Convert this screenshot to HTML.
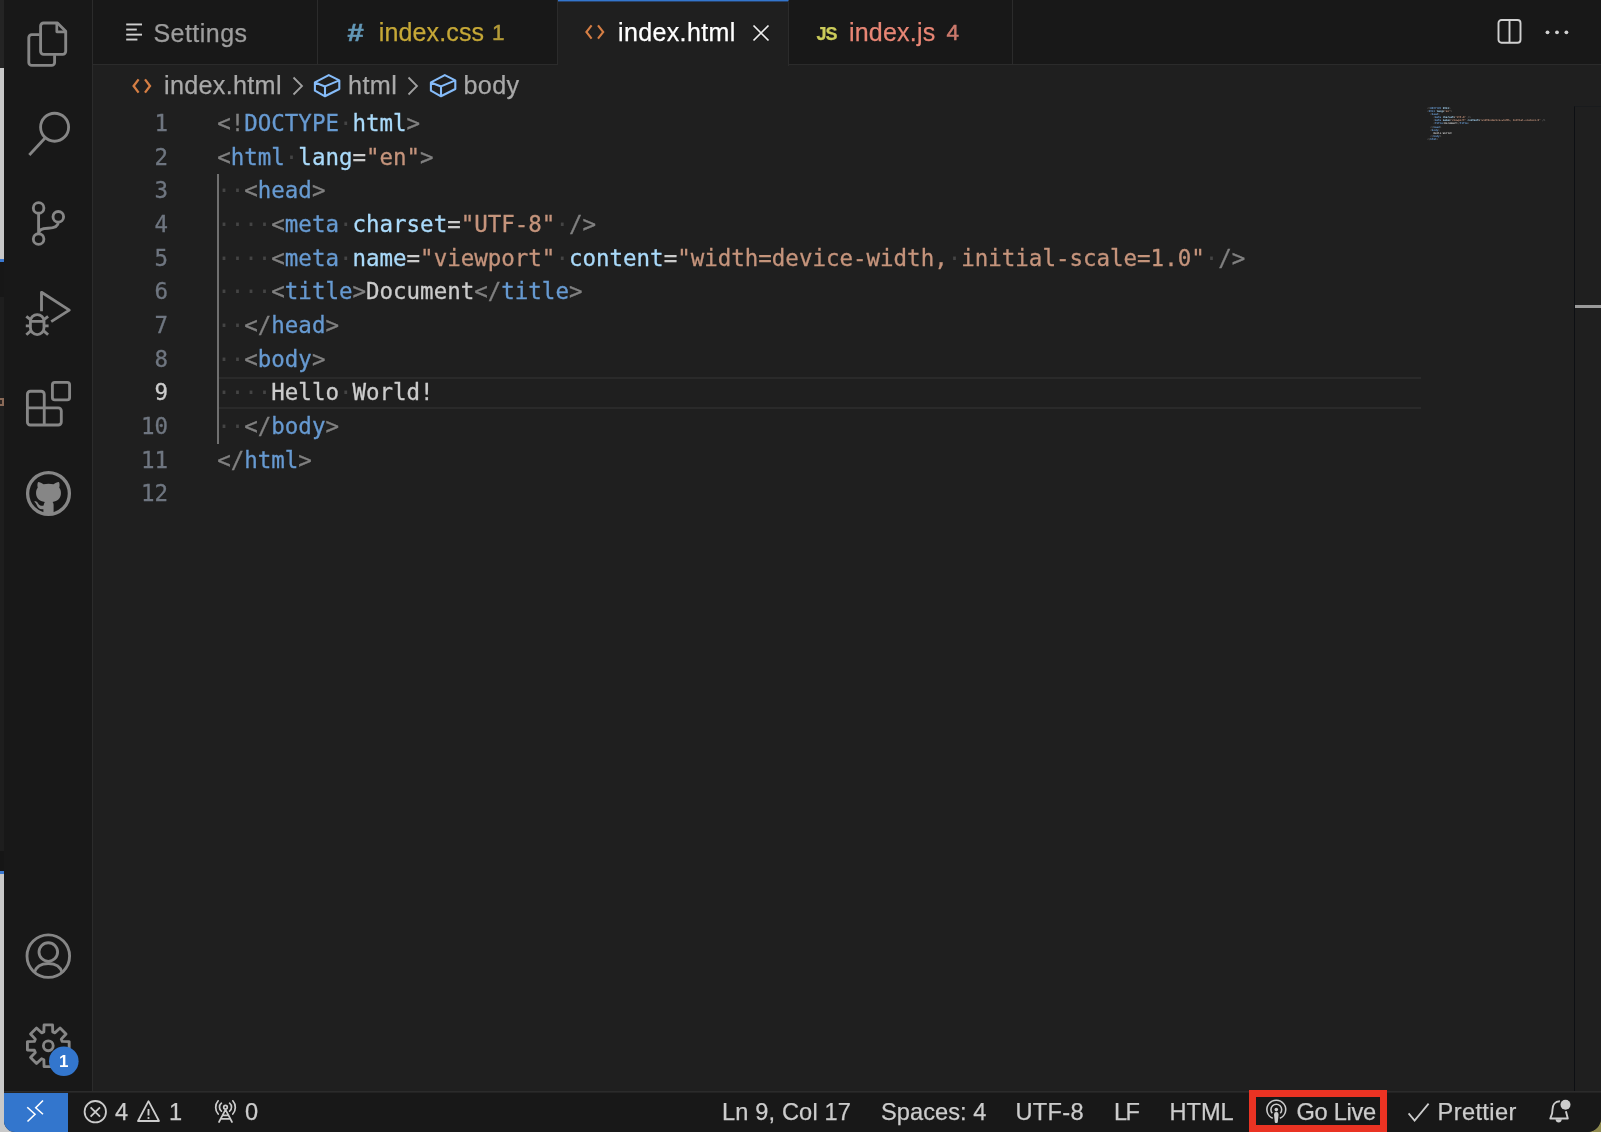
<!DOCTYPE html>
<html lang="en">
<head>
<meta charset="UTF-8">
<title>index.html</title>
<style>
*{box-sizing:border-box;margin:0;padding:0}
html,body{width:1602px;height:1134px;overflow:hidden;background:#fff}
body{position:relative;font-family:"Liberation Sans",sans-serif;color:#ccc}
.abs{position:absolute}
#backdrop{left:0;top:0;width:1602px;height:1134px;background:#fff}
#window{left:4px;top:0;width:1597px;height:1132px;background:#1f1f1f;border-radius:0 0 14px 11px;overflow:hidden}
#activity{will-change:transform;left:0;top:0;width:89px;height:1092px;background:#181818;border-right:1px solid #2b2b2b}
#tabs{will-change:transform;left:89px;top:0;right:0;height:65px;background:#181818;border-bottom:1px solid #2b2b2b}
.tab{-webkit-text-stroke:0.25px;position:absolute;top:0;height:65px;border-right:1px solid #2b2b2b;font-size:25px;line-height:64px;white-space:nowrap}
.tab span{position:absolute;top:0}
#crumbs{-webkit-text-stroke:0.25px;will-change:transform;left:89px;top:65px;right:0;height:41px;font-size:25.2px;line-height:40px;color:#a9a9a9;white-space:nowrap}
#crumbs span{position:absolute;top:0}
#status{-webkit-text-stroke:0.25px;will-change:transform;left:0;top:1091px;width:1597px;height:41px;background:#181818;border-top:1px solid #2b2b2b;box-shadow:inset 0 1px 0 #232323;font-size:23.6px;line-height:40px;color:#ccc;white-space:nowrap}
#status span{position:absolute;top:0}
#code{left:0;top:107px;will-change:transform;-webkit-text-stroke:0.3px;font-family:"DejaVu Sans Mono","Liberation Mono",monospace;font-size:22.47px;line-height:33.64px;white-space:pre}
.ln{position:absolute;left:89px;width:75px;text-align:right;color:#6f7680;height:33.64px}
.cl{position:absolute;left:213.2px;height:33.64px;color:#ccc}
.g{color:#808080}.t{color:#679ad1}.a{color:#aadafa}.s{color:#c5947c}.w{color:#444;-webkit-text-stroke:0}
</style>
</head>
<body>
<div id="backdrop" class="abs">
  <div class="abs" style="left:0;top:0;width:6px;height:68px;background:#242424"></div>
  <div class="abs" style="left:0;top:68px;width:6px;height:191px;background:#c8c8c8"></div>
  <div class="abs" style="left:0;top:259px;width:6px;height:3px;background:#3a78d0"></div>
  <div class="abs" style="left:0;top:262px;width:6px;height:35px;background:#171717"></div>
  <div class="abs" style="left:0;top:297px;width:6px;height:554px;background:#1e1e1e"></div>
  <div class="abs" style="left:0;top:398px;width:4px;height:8px;background:#8a6a58"></div>
  <div class="abs" style="left:0;top:400px;width:2px;height:4px;background:#2a2422"></div>
  <div class="abs" style="left:0;top:851px;width:6px;height:20px;background:#161616"></div>
  <div class="abs" style="left:0;top:871px;width:6px;height:3px;background:#3a78d0"></div>
  <div class="abs" style="left:0;top:874px;width:20px;height:258px;background:#c9c9c9"></div>
  <div class="abs" style="left:1585px;top:1116px;width:16px;height:16px;background:#8f8a4f"></div>
</div>
<div id="window" class="abs">
  <div id="activity" class="abs">
  <svg class="abs" style="left:0;top:0" width="89" height="1092" viewBox="0 0 89 1092">
    <g fill="none" stroke="#868686" stroke-width="2.85" stroke-linejoin="round">
      <!-- files -->
      <path d="M39.6 23 H53.5 L61.7 31.2 V51.3 a3 3 0 0 1 -3 3 H39.6 a3 3 0 0 1 -3 -3 V26 a3 3 0 0 1 3 -3 Z"/>
      <path d="M52.8 23.5 V31.8 H61.5" stroke-width="2.7"/>
      <path d="M35.5 34.6 H27.8 a3 3 0 0 0 -3 3 V62.4 a3 3 0 0 0 3 3 H47.6 a3 3 0 0 0 3 -3 V55.3"/>
      <!-- search -->
      <circle cx="50.6" cy="127.2" r="14"/>
      <path d="M41.3 137.7 L25.3 155" stroke-linecap="butt"/>
      <!-- scm -->
      <circle cx="34.6" cy="207.9" r="5.3"/><circle cx="54.3" cy="216.8" r="5.3"/><circle cx="34.6" cy="239" r="5.3"/>
      <path d="M34.6 213.2 V233.7 M54.3 222.1 C54.3 227.5 49 228.2 44 228.2 C38.5 228.2 34.6 230 34.6 233.7"/>
      <!-- debug -->
      <path d="M37.5 311.3 V292.3 L65.3 310.1 L47.2 321.6" stroke-linecap="butt"/>
      <path d="M26.4 321.3 A6.8 6.75 0 0 1 40 321.3 H26.4 V327.7 A6.8 6.85 0 0 0 40 327.7 V321.3"/>
      <path d="M22.3 316.3 L26.5 319.7 M44.1 316.3 L39.9 319.7 M21.8 325.8 H25.6 M40.8 325.8 H44.6 M22.3 334.8 L27 330.6 M44.1 334.8 L39.4 330.6" stroke-linecap="butt"/>
      <!-- extensions -->
      <rect x="48.4" y="382.3" width="17.2" height="17.5" rx="2.4"/>
      <path d="M26.4 391.2 H37.25 a3 3 0 0 1 3 3 V407.9 H54.3 a3 3 0 0 1 3 3 V422 a3 3 0 0 1 -3 3 H26.4 a3 3 0 0 1 -3 -3 V394.2 a3 3 0 0 1 3 -3 Z M23.4 407.9 H40.25 V425"/>
      <!-- github -->
      <circle cx="44.5" cy="493.5" r="20.9" stroke-width="3.3"/>
      <!-- account -->
      <circle cx="44.3" cy="956.1" r="21.3"/>
      <circle cx="44.3" cy="952" r="9.3"/>
      <path d="M30.3 973 C32 966.5 37 963.5 44.3 963.5 C51.6 963.5 56.6 966.5 58.3 973"/>
      <!-- gear -->
      <path d="M39.85 1031.90 L40.07 1024.92 L48.53 1024.92 L48.75 1031.90 L50.98 1032.82 L56.07 1028.05 L62.05 1034.03 L57.28 1039.12 L58.20 1041.35 L65.18 1041.57 L65.18 1050.03 L58.20 1050.25 L57.28 1052.48 L62.05 1057.57 L56.07 1063.55 L50.98 1058.78 L48.75 1059.70 L48.53 1066.68 L40.07 1066.68 L39.85 1059.70 L37.62 1058.78 L32.53 1063.55 L26.55 1057.57 L31.32 1052.48 L30.40 1050.25 L23.42 1050.03 L23.42 1041.57 L30.40 1041.35 L31.32 1039.12 L26.55 1034.03 L32.53 1028.05 L37.62 1032.82 Z"/>
      <circle cx="44.3" cy="1045.8" r="4.9"/>
    </g>
    <!-- github cat -->
    <path fill="#868686" d="M34.05 482.05 C36 482.2 38 483.2 39.5 484.3 C42.7 483.4 46.3 483.4 49.5 484.3 C51 483.2 53 482.2 54.97 482.05 C55.8 484 55.7 486.2 55.2 487.6 C56.4 489 56.95 490.8 56.95 493 C56.95 498.5 53.5 501.2 48.6 501.9 C49.4 502.8 49.6 503.8 49.6 505 V514.2 H39.4 V509.2 C35.5 510 33.8 507.5 32.8 505.3 C32 503.6 31.2 502.6 30.2 501.6 C31.5 501 33 501.6 34 503.2 C35.4 505.5 37.4 506.2 39.6 505.6 C39.7 504.3 40.1 503 40.8 502 C35.5 501.2 32.05 498.5 32.05 493 C32.05 490.8 32.6 489 33.8 487.6 C33.3 486.2 33.2 484 34.05 482.05 Z"/>
    <circle cx="59.8" cy="1061.2" r="14.8" fill="#3376cd"/>
    <text x="59.8" y="1067.2" text-anchor="middle" font-family="Liberation Sans, sans-serif" font-weight="bold" font-size="17" fill="#fff">1</text>
  </svg>
  </div>
  <div id="tabs" class="abs">
    <div class="tab" style="left:0;width:225px;color:#9d9d9d">
      <svg class="abs" style="left:33px;top:22px" width="18" height="20" viewBox="0 0 18 20"><g fill="#d0d0d0"><rect x="0.2" y="1.5" width="15.8" height="1.9"/><rect x="0.2" y="6.6" width="10.6" height="1.9"/><rect x="0.2" y="11.7" width="15.8" height="1.9"/><rect x="0.2" y="16.6" width="11.2" height="1.9"/></g></svg>
      <span style="left:60.5px;top:1px;letter-spacing:0.45px">Settings</span>
    </div>
    <div class="tab" style="left:225px;width:240px;color:#c6a837">
      <span style="left:28.5px;top:0.5px;color:#6398b7;font-weight:bold;font-style:italic;font-size:24px;-webkit-text-stroke:0.5px;transform:scaleX(1.22);transform-origin:0 50%">#</span>
      <span style="left:60.7px;letter-spacing:0.15px">index.css</span>
      <span style="left:174px;top:0.5px;font-size:22.5px;-webkit-text-stroke:0.5px;color:#b39a38">1</span>
    </div>
    <div class="tab" style="left:465px;width:231px;color:#fff;background:#1f1f1f;height:66px;border-top:1px solid #3376cd;box-shadow:inset 0 1px 0 #28426a;line-height:63px">
      <svg class="abs" style="left:26px;top:21.4px" width="22" height="20" viewBox="0 0 22 20"><path d="M7.6 3.4 L2.4 10 L7.6 16.6 M14 3.4 L19.2 10 L14 16.6" fill="none" stroke="#d57e44" stroke-width="2.1"/></svg>
      <span style="left:60px;letter-spacing:0.37px">index.html</span>
      <svg class="abs" style="left:193.3px;top:22px" width="20" height="20" viewBox="0 0 20 20"><path d="M2.5 2.5 L17.5 17.5 M17.5 2.5 L2.5 17.5" fill="none" stroke="#f0f0f0" stroke-width="1.75"/></svg>
    </div>
    <div class="tab" style="left:696px;width:224px;color:#e88675">
      <span style="left:27.5px;color:#cbcb5a;font-weight:bold;font-size:18px;letter-spacing:-1px;top:1.5px">JS</span>
      <span style="left:60px;letter-spacing:0.2px">index.js</span>
      <span style="left:157.5px;top:0.5px;font-size:22.5px;-webkit-text-stroke:0.5px;color:#cc796c">4</span>
    </div>
    <svg class="abs" style="left:1403px;top:17px" width="30" height="30" viewBox="0 0 30 30"><rect x="2.5" y="3" width="22" height="22.8" rx="3" fill="none" stroke="#d0d0d0" stroke-width="1.9"/><path d="M13.5 3 V25.8" stroke="#d0d0d0" stroke-width="1.9"/></svg>
    <svg class="abs" style="left:1450px;top:27px" width="30" height="10" viewBox="0 0 30 10"><g fill="#d0d0d0"><circle cx="4.5" cy="5.3" r="1.9"/><circle cx="14" cy="5.3" r="1.9"/><circle cx="23.4" cy="5.3" r="1.9"/></g></svg>
  </div>
  <div id="crumbs" class="abs">
    <svg class="abs" style="left:37px;top:10.5px" width="24" height="20" viewBox="0 0 24 20"><path d="M8.6 3.4 L3.6 10 L8.6 16.6 M15 3.4 L20 10 L15 16.6" fill="none" stroke="#d57e44" stroke-width="2.3"/></svg>
    <span style="left:71px;letter-spacing:0.3px">index.html</span>
    <svg class="abs" style="left:198px;top:9.5px" width="14" height="22" viewBox="0 0 14 22"><path d="M2.5 2.5 L11 11 L2.5 19.5" fill="none" stroke="#a0a0a0" stroke-width="1.8"/></svg>
    <svg class="abs" style="left:220px;top:6px" width="29" height="28" viewBox="0 0 29 28"><path d="M1.9 11.4 L15.8 4.1 L26.3 9.4 V18 L12 25.3 L1.9 19.7 Z M1.9 11.4 L12 15.4 L26.3 9.4 M12 15.4 V25.3" fill="none" stroke="#86bcf9" stroke-width="2.1" stroke-linejoin="round"/></svg>
    <span style="left:255px;letter-spacing:0.4px">html</span>
    <svg class="abs" style="left:313px;top:9.5px" width="14" height="22" viewBox="0 0 14 22"><path d="M2.5 2.5 L11 11 L2.5 19.5" fill="none" stroke="#a0a0a0" stroke-width="1.8"/></svg>
    <svg class="abs" style="left:335.7px;top:6px" width="29" height="28" viewBox="0 0 29 28"><path d="M1.9 11.4 L15.8 4.1 L26.3 9.4 V18 L12 25.3 L1.9 19.7 Z M1.9 11.4 L12 15.4 L26.3 9.4 M12 15.4 V25.3" fill="none" stroke="#86bcf9" stroke-width="2.1" stroke-linejoin="round"/></svg>
    <span style="left:370.5px;letter-spacing:0.35px">body</span>
  </div>
  <div id="code" class="abs">

<div class="abs" style="left:213px;top:270px;width:1204px;height:2px;background:#2a2a2a"></div>
<div class="abs" style="left:213px;top:300px;width:1204px;height:2px;background:#2a2a2a"></div>
<div class="abs" style="left:213px;top:66.5px;width:2px;height:270px;background:#707070"></div>

<div class="ln" style="top:0.20px">1</div><div class="cl" style="top:0.20px"><span class="g">&lt;!</span><span class="t">DOCTYPE</span><span class="w">·</span><span class="a">html</span><span class="g">&gt;</span></div>
<div class="ln" style="top:33.84px">2</div><div class="cl" style="top:33.84px"><span class="g">&lt;</span><span class="t">html</span><span class="w">·</span><span class="a">lang</span>=<span class="s">"en"</span><span class="g">&gt;</span></div>
<div class="ln" style="top:67.48px">3</div><div class="cl" style="top:67.48px"><span class="w">··</span><span class="g">&lt;</span><span class="t">head</span><span class="g">&gt;</span></div>
<div class="ln" style="top:101.12px">4</div><div class="cl" style="top:101.12px"><span class="w">····</span><span class="g">&lt;</span><span class="t">meta</span><span class="w">·</span><span class="a">charset</span>=<span class="s">"UTF-8"</span><span class="w">·</span><span class="g">/&gt;</span></div>
<div class="ln" style="top:134.76px">5</div><div class="cl" style="top:134.76px"><span class="w">····</span><span class="g">&lt;</span><span class="t">meta</span><span class="w">·</span><span class="a">name</span>=<span class="s">"viewport"</span><span class="w">·</span><span class="a">content</span>=<span class="s">"width=device-width,<span class="w">·</span>initial-scale=1.0"</span><span class="w">·</span><span class="g">/&gt;</span></div>
<div class="ln" style="top:168.40px">6</div><div class="cl" style="top:168.40px"><span class="w">····</span><span class="g">&lt;</span><span class="t">title</span><span class="g">&gt;</span>Document<span class="g">&lt;/</span><span class="t">title</span><span class="g">&gt;</span></div>
<div class="ln" style="top:202.04px">7</div><div class="cl" style="top:202.04px"><span class="w">··</span><span class="g">&lt;/</span><span class="t">head</span><span class="g">&gt;</span></div>
<div class="ln" style="top:235.68px">8</div><div class="cl" style="top:235.68px"><span class="w">··</span><span class="g">&lt;</span><span class="t">body</span><span class="g">&gt;</span></div>
<div class="ln" style="top:269.32px;color:#ccc">9</div><div class="cl" style="top:269.32px"><span class="w">····</span>Hello<span class="w">·</span>World!</div>
<div class="ln" style="top:302.96px">10</div><div class="cl" style="top:302.96px"><span class="w">··</span><span class="g">&lt;/</span><span class="t">body</span><span class="g">&gt;</span></div>
<div class="ln" style="top:336.60px">11</div><div class="cl" style="top:336.60px"><span class="g">&lt;/</span><span class="t">html</span><span class="g">&gt;</span></div>
<div class="ln" style="top:370.24px">12</div><div class="cl" style="top:370.24px"></div>

</div>

  <svg class="abs" style="left:1423px;top:106px;will-change:transform" width="130" height="40" viewBox="0 0 130 40" aria-hidden="true"><g transform="translate(0.2,0) scale(0.2583)" font-family="DejaVu Sans Mono, Liberation Mono, monospace" font-size="10" font-weight="bold"><text x="0.0" y="10.8" fill="#808080">&lt;!</text><text x="12.0" y="10.8" fill="#679ad1">DOCTYPE</text><text x="60.2" y="10.8" fill="#aadafa">html</text><text x="84.3" y="10.8" fill="#808080">&gt;</text><text x="0.0" y="23.0" fill="#808080">&lt;</text><text x="6.0" y="23.0" fill="#679ad1">html</text><text x="36.1" y="23.0" fill="#aadafa">lang</text><text x="60.2" y="23.0" fill="#cccccc">=</text><text x="66.2" y="23.0" fill="#c5947c">&quot;en&quot;</text><text x="90.3" y="23.0" fill="#808080">&gt;</text><text x="12.0" y="35.1" fill="#808080">&lt;</text><text x="18.1" y="35.1" fill="#679ad1">head</text><text x="42.1" y="35.1" fill="#808080">&gt;</text><text x="24.1" y="47.2" fill="#808080">&lt;</text><text x="30.1" y="47.2" fill="#679ad1">meta</text><text x="60.2" y="47.2" fill="#aadafa">charset</text><text x="102.3" y="47.2" fill="#cccccc">=</text><text x="108.4" y="47.2" fill="#c5947c">&quot;UTF-8&quot;</text><text x="156.5" y="47.2" fill="#808080">/&gt;</text><text x="24.1" y="59.3" fill="#808080">&lt;</text><text x="30.1" y="59.3" fill="#679ad1">meta</text><text x="60.2" y="59.3" fill="#aadafa">name</text><text x="84.3" y="59.3" fill="#cccccc">=</text><text x="90.3" y="59.3" fill="#c5947c">&quot;viewport&quot;</text><text x="156.5" y="59.3" fill="#aadafa">content</text><text x="198.7" y="59.3" fill="#cccccc">=</text><text x="204.7" y="59.3" fill="#c5947c">&quot;width=device-width,</text><text x="331.1" y="59.3" fill="#c5947c">initial-scale=1.0&quot;</text><text x="445.5" y="59.3" fill="#808080">/&gt;</text><text x="24.1" y="71.4" fill="#808080">&lt;</text><text x="30.1" y="71.4" fill="#679ad1">title</text><text x="60.2" y="71.4" fill="#808080">&gt;</text><text x="66.2" y="71.4" fill="#cccccc">Document</text><text x="114.4" y="71.4" fill="#808080">&lt;/</text><text x="126.4" y="71.4" fill="#679ad1">title</text><text x="156.5" y="71.4" fill="#808080">&gt;</text><text x="12.0" y="83.5" fill="#808080">&lt;/</text><text x="24.1" y="83.5" fill="#679ad1">head</text><text x="48.2" y="83.5" fill="#808080">&gt;</text><text x="12.0" y="95.7" fill="#808080">&lt;</text><text x="18.1" y="95.7" fill="#679ad1">body</text><text x="42.1" y="95.7" fill="#808080">&gt;</text><text x="24.1" y="107.8" fill="#cccccc">Hello</text><text x="60.2" y="107.8" fill="#cccccc">World!</text><text x="12.0" y="119.9" fill="#808080">&lt;/</text><text x="24.1" y="119.9" fill="#679ad1">body</text><text x="48.2" y="119.9" fill="#808080">&gt;</text><text x="0.0" y="132.0" fill="#808080">&lt;/</text><text x="12.0" y="132.0" fill="#679ad1">html</text><text x="36.1" y="132.0" fill="#808080">&gt;</text></g></svg>
  <div class="abs" style="left:1570px;top:106px;width:27px;height:985px;border-left:1px solid #0d0f13;border-top:1px solid #191b1d"></div>
  <div class="abs" style="left:1571px;top:305px;width:26px;height:3px;background:#9a9a9a"></div>
  <div id="status" class="abs">
    <div class="abs" style="left:0;top:1px;width:64px;height:40px;background:#3376cd"></div>
    <svg class="abs" style="left:20px;top:7px" width="24" height="26" viewBox="0 0 24 26"><path d="M3.25 8.25 L11 15.25 L3.5 22.5 M19 1.5 L11.75 8.75 L19 15.25" fill="none" stroke="#fff" stroke-width="1.6"/></svg>
    <svg class="abs" style="left:78px;top:7px" width="27" height="27" viewBox="0 0 27 27"><circle cx="13.3" cy="12.7" r="10.7" fill="none" stroke="#ccc" stroke-width="1.8"/><path d="M8.6 8.3 L18 17.7 M18 8.3 L8.6 17.7" stroke="#ccc" stroke-width="1.8"/></svg>
    <span style="left:111px">4</span>
    <svg class="abs" style="left:131px;top:7px" width="28" height="26" viewBox="0 0 28 26"><path d="M13.5 2.2 L24 22 L3 22 Z" fill="none" stroke="#ccc" stroke-width="1.8" stroke-linejoin="round"/><path d="M13.5 10 V16.5" stroke="#ccc" stroke-width="1.9"/><circle cx="13.5" cy="19" r="1.1" fill="#ccc"/></svg>
    <span style="left:165px">1</span>
    <svg class="abs" style="left:210px;top:7px" width="26" height="26" viewBox="0 0 26 26"><g fill="none" stroke="#ccc" stroke-width="1.7" stroke-linecap="round" stroke-linejoin="round"><path d="M5 23 L11.5 10.6 L18 23 M8.4 16.4 H14.6 M6.7 19.8 H16.3"/><circle cx="11.5" cy="8.2" r="1.8"/><path d="M7.4 4.2 A5.16 5.16 0 0 0 7.4 12.2"/><path d="M15.6 4.2 A5.16 5.16 0 0 1 15.6 12.2"/><path d="M4.2 1.8 A9.96 9.96 0 0 0 4.2 15"/><path d="M18.8 1.8 A9.96 9.96 0 0 1 18.8 15"/></g></svg>
    <span style="left:241px">0</span>
    <span style="left:718px;letter-spacing:0.15px">Ln 9, Col 17</span>
    <span style="left:877px;letter-spacing:0.05px">Spaces: 4</span>
    <span style="left:1011.5px;letter-spacing:0.3px">UTF-8</span>
    <span style="left:1110px;letter-spacing:-1.6px">LF</span>
    <span style="left:1165.5px">HTML</span>
    <div class="abs" style="left:1245px;top:-2px;width:138px;height:42px;border:7px solid #ea3323"></div>
    <svg class="abs" style="left:1260px;top:7px" width="26" height="26" viewBox="0 0 26 26"><g fill="none" stroke="#ccc" stroke-width="1.55" stroke-linecap="butt"><path d="M8.78 19.32 A9.4 9.4 0 1 1 15.82 19.32"/><path d="M8.31 14.23 A5.4 5.4 0 1 1 16.29 14.23"/></g><circle cx="12.3" cy="10.6" r="1.8" fill="#ccc"/><path d="M10 15.4 a2.3 2.3 0 0 1 4.6 0 L13.8 23 a1 1 0 0 1 -1 0.9 h-1 a1 1 0 0 1 -1 -0.9 Z" fill="#ccc"/></svg>
    <span style="left:1292.5px;letter-spacing:-0.3px">Go Live</span>
    <svg class="abs" style="left:1402px;top:9px" width="26" height="22" viewBox="0 0 26 22"><path d="M2.6 12.4 L8.6 19.5 L22.6 2.6" fill="none" stroke="#ccc" stroke-width="1.8"/></svg>
    <span style="left:1433.5px;letter-spacing:0.4px">Prettier</span>
    <svg class="abs" style="left:1543px;top:6px" width="26" height="28" viewBox="0 0 26 28"><path d="M12.9 3.3 C7.8 3.3 5.5 7.2 5.5 11.5 L5.1 15.5 L3.3 20.5 H20.8 L18.9 13.2" fill="none" stroke="#ccc" stroke-width="1.9" stroke-linejoin="round"/><path d="M8.5 21.2 A3.2 4 0 0 0 14.8 21.2 Z" fill="#ccc"/><circle cx="18.5" cy="6.8" r="5" fill="#ccc"/></svg>
  </div>
</div>
</body>
</html>
